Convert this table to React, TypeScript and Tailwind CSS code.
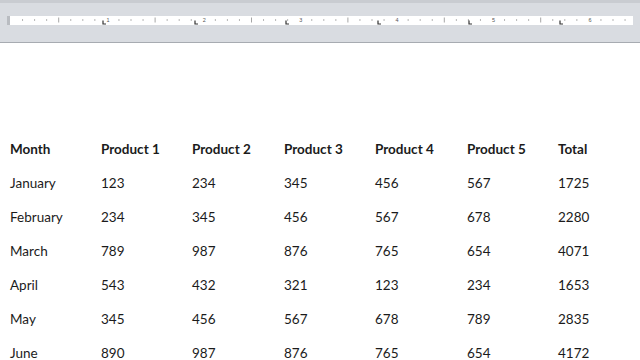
const months = [
  ['January', '123', '234', '345', '456', '567', '1725'],
  ['February', '234', '345', '456', '567', '678', '2280'],
  ['March', '789', '987', '876', '765', '654', '4071'],
  ['April', '543', '432', '321', '123', '234', '1653'],
  ['May', '345', '456', '567', '678', '789', '2835'],
  ['June', '890', '987', '876', '765', '654', '4172'],
];

const headers = ['Month', 'Product 1', 'Product 2', 'Product 3', 'Product 4', 'Product 5', 'Total'];

// one inch on the ruler is ~96.4px, the strip starts at x=8
function Ruler() {
  const inch = 96.4;
  const origin = 8.5;
  const ticks: JSX.Element[] = [];
  for (let i = 0; i < 52; i++) {
    const x = origin + (i * inch) / 8;
    if (x > 630) break;
    if (i % 8 === 0) {
      if (i > 0) {
        ticks.push(
          <text key={'n' + i} x={x - 0.5} y={5.5} fontSize="5.5" fill="#555" fontFamily="Liberation Sans, sans-serif">
            {i / 8}
          </text>
        );
      }
    } else if (i % 4 === 0) {
      ticks.push(<line key={i} x1={x} x2={x} y1={1.5} y2={6.5} stroke="#a5a5a5" strokeWidth="1" />);
    } else {
      ticks.push(<line key={i} x1={x} x2={x} y1={3} y2={5} stroke="#b5b5b5" strokeWidth="1" />);
    }
  }
  // tab stops under the column starts
  const tabs = [101, 193, 284, 376, 467, 558].map((t) => (
    <path key={'t' + t} d={`M${t} 4.5 v3.5 h3`} stroke="#333" strokeWidth="1.2" fill="none" />
  ));
  return (
    <svg width="624" height="9" viewBox="8 0 624 9" className="block">
      {ticks}
      {tabs}
    </svg>
  );
}

export default function App() {
  return (
    <div className="w-[640px] h-[360px] overflow-hidden bg-white" style={{ fontFamily: 'Lato, "Open Sans", sans-serif' }}>
      {/* Ruler bar */}
      <div className="h-[43px] bg-[#d9dce1] border-b border-[#a7abb1] flex flex-col">
        <div className="h-[3px] bg-[#c9ccd1]" />
        <div className="mt-[13px] mx-[7px] h-[9px] bg-white border-l-[3px] border-[#b9bcc1] overflow-hidden">
          <Ruler />
        </div>
      </div>

      {/* Table */}
      <div className="mt-[89px] pl-[10px] text-[13.5px] text-[#1b1b1b]">
        <div className="grid grid-cols-[91px_91px_92px_91px_92px_91px_1fr] h-[34px] items-center font-bold">
          {headers.map((h) => (
            <div key={h}>{h}</div>
          ))}
        </div>
        {months.map((row) => (
          <div key={row[0]} className="grid grid-cols-[91px_91px_92px_91px_92px_91px_1fr] h-[34px] items-center">
            {row.map((cell, i) => (
              <div key={i}>{cell}</div>
            ))}
          </div>
        ))}
      </div>
    </div>
  );
}
